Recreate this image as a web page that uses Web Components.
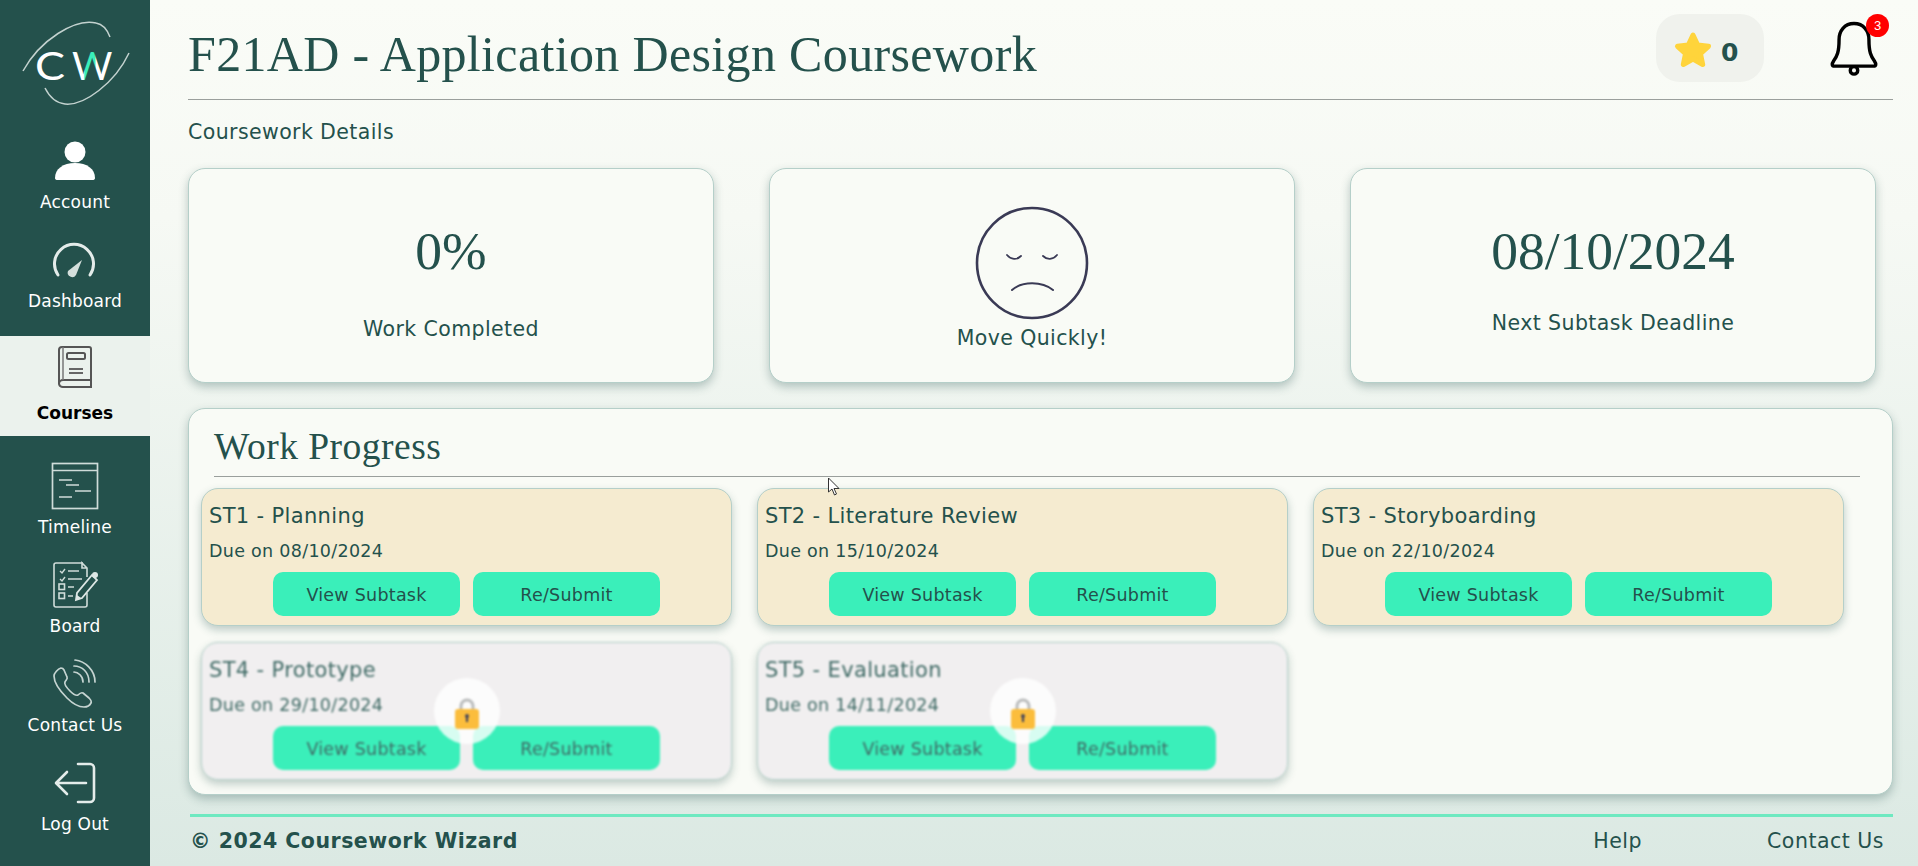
<!DOCTYPE html>
<html lang="en">
<head>
<meta charset="utf-8">
<title>Coursework Wizard</title>
<style>
html, body { margin: 0; height: 100%; }
body {
    font-family: "DejaVu Sans", Verdana, sans-serif;
    color: #24514c;
    background: linear-gradient(180deg, #fafcf7 0%, #f6f9f4 25%, #dbe9e3 100%);
    overflow: hidden;
}
</style>
</head>
<body>
<cw-app></cw-app>
<script>
const icons = {
    account: `<circle cx="30" cy="21" r="10.500" fill="#fff"/><path d="M10 47c0-9 8-15 20-15s20 6 20 15c0 1.500-1 2-2.500 2h-35C11 49 10 48.500 10 47z" fill="#fff"/>`,
    dashboard: `<g fill="none" stroke="#e4ecea" stroke-width="3" stroke-linecap="round"><path d="M14 45a19.500 19.500 0 1 1 32 0" transform="translate(-1 0)"/></g><path d="M23 41l14-11-6 15a4.500 4.500 0 0 1-8-4z" fill="#d5dfdc"/>`,
    courses: `<g fill="none" stroke="#555" stroke-width="2"><path d="M14 45V11a3 3 0 0 1 3-3h27a2 2 0 0 1 2 2v37"/><path d="M14 45a4 4 0 0 1 4-4h28v7H18a4 4 0 0 1-4-3z"/><rect x="22" y="14" width="18" height="6" rx="1.500"/></g><path d="M24 30h14M24 34h14" stroke="#666" stroke-width="2"/><path d="M18 8v33" stroke="#777" stroke-width="1.500"/>`,
    timeline: `<g fill="none" stroke="#cfdcd9" stroke-width="1.700"><rect x="7.500" y="7.500" width="45" height="45"/><path d="M7.500 14.500h45"/></g><path d="M14 24h13M21 29h13M30 35h16M14 41h13" stroke="#cfdcd9" stroke-width="1.700"/>`,
    board: `<g fill="none" stroke="#cfdcd9" stroke-width="1.600"><path d="M38 8H11a2 2 0 0 0-2 2v40a2 2 0 0 0 2 2h29a2 2 0 0 0 2-2V38"/><path d="M42 22v-9l-5-5v5h5"/><path d="M15 16l2 2 3-4M15 24l2 2 3-4" stroke-width="1.400"/><path d="M23 16h11M23 24h14M23 32h6M23 41h5"/><rect x="14" y="29" width="5.500" height="5.500"/><rect x="14" y="38" width="5.500" height="5.500"/></g><path d="M31 45l1-7 15-18 5 5-15 18z" fill="none" stroke="#dde7e5" stroke-width="1.800"/><circle cx="50" cy="20" r="3" fill="#dde7e5"/><path d="M31 45l1-5 4 3z" fill="#dde7e5"/>`,
    contact: `<g fill="none" stroke="#c5d4d1" stroke-width="1.700" stroke-linecap="round" stroke-linejoin="round"><path d="M16 14c-3 1-7 5-7 8 0 8 7 16 13 22 5 5 12 9 17 9 3 0 6-2 7-4 1-2 0-3-2-5l-6-5c-2-1-3 0-5 2-2 1-4 0-8-4s-6-7-5-9 3-3 2-5l-3-7c-1-2-2-2-3-2z"/><path d="M29 18c4 0 9 4 9 10"/><path d="M29 12c8 0 15 6 15 16" /><path d="M30 6c10 1 20 10 20 22"/></g>`,
    logout: `<g fill="none" stroke="#e4ecea" stroke-width="2.600" stroke-linecap="round" stroke-linejoin="round"><path d="M33 11h12a4 4 0 0 1 4 4v30a4 4 0 0 1-4 4H33"/><path d="M41 30H12M22 19L11 30l11 11"/></g>`,
};

class CwLogo extends HTMLElement {
    constructor() {
        super();
        this.attachShadow({ mode: "open" });
    }

    connectedCallback() {
        this.shadowRoot.innerHTML = `
            <style>
            :host { display: block; height: 125px; }
            svg { display: block; }
            </style>
            <svg width="150" height="125" viewBox="0 0 150 125">
                <defs>
                    <linearGradient id="w" x1="0" x2="38" y1="0" y2="0" gradientUnits="userSpaceOnUse">
                        <stop offset="0.3" stop-color="#fff"/>
                        <stop offset="0.34" stop-color="#3aefba"/>
                        <stop offset="0.6" stop-color="#3aefba"/>
                        <stop offset="0.64" stop-color="#fff"/>
                    </linearGradient>
                </defs>
                <path d="M23 71C40 40 75 18 96 23c6 1 11 6 14 14" fill="none" stroke="#c3d2cf" stroke-width="1.500"/>
                <path d="M129 53c-14 30-45 53-64 51-9-1-15-6-20-16" fill="none" stroke="#c3d2cf" stroke-width="1.500"/>
                <text transform="translate(35 80) scale(1.150 1)" font-family="Lato, sans-serif" font-weight="400" font-size="39" fill="#fff">C</text>
                <text transform="translate(72 80)" font-family="Lato, sans-serif" font-weight="400" font-size="39" fill="url(#w)">W</text>
            </svg>
        `;
    }
}

class CwNavItem extends HTMLElement {
    constructor() {
        super();
        this.attachShadow({ mode: "open" });
    }

    connectedCallback() {
        this.shadowRoot.innerHTML = `
            <style>
            :host {
                display: flex;
                flex-direction: column;
                align-items: center;
                height: 99px;
                color: #fff;
                font-size: 17px;
                letter-spacing: .2px;
            }
            :host([active]) {
                height: 100px;
                margin: 13px 0 14px;
                background: #ebf2ed;
                color: #000;
                font-weight: 700;
                letter-spacing: 0;
            }
            .icon { height: 67px; padding-top: 6px; box-sizing: border-box; }
            :host([active]) .icon { padding-top: 3px; }
            svg { display: block; }
            .label { line-height: 20px; }
            </style>
            <div class="icon"><svg width="60" height="60" viewBox="0 0 60 60">${icons[this.getAttribute("icon")]}</svg></div>
            <div class="label"><slot></slot></div>
        `;
    }
}

class CwSidebar extends HTMLElement {
    constructor() {
        super();
        this.attachShadow({ mode: "open" });
    }

    connectedCallback() {
        this.shadowRoot.innerHTML = `
            <style>
            :host {
                display: flex;
                flex-direction: column;
                flex: 0 0 150px;
                height: 866px;
                background: #24514c;
            }
            </style>
            <slot></slot>
        `;
    }
}

class CwHeader extends HTMLElement {
    constructor() {
        super();
        this.attachShadow({ mode: "open" });
    }

    connectedCallback() {
        this.shadowRoot.innerHTML = `
            <style>
            :host {
                display: flex;
                align-items: flex-start;
                height: 100px;
                border-bottom: 1px solid #9a9f9c;
                box-sizing: border-box;
            }
            h1 {
                flex: 1;
                margin: 0;
                padding-top: 25px;
                font: 400 50px/58px "Liberation Serif", Georgia, serif;
                letter-spacing: .35px;
                color: #24514c;
            }
            .stars {
                display: flex;
                align-items: center;
                width: 108px;
                height: 68px;
                margin-top: 14px;
                padding-left: 17px;
                box-sizing: border-box;
                border-radius: 24px;
                background: #f0f2ed;
                font-weight: 700;
                font-size: 25px;
                gap: 8px;
            }
            .stars svg { margin-top: 2px; }
            .stars span { margin-top: 8px; }
            .bell {
                position: relative;
                width: 64px;
                height: 64px;
                margin: 16px 7px 0 58px;
            }
            .bell svg { display: block; }
            .badge {
                position: absolute;
                top: -2px;
                right: -3px;
                width: 23px;
                height: 23px;
                border-radius: 50%;
                background: #ff0000;
                color: #fff;
                font: 13px/23px "Liberation Sans", Arial, sans-serif;
                text-align: center;
            }
            </style>
            <h1><slot></slot></h1>
            <div class="stars">
                <svg width="40" height="38" viewBox="0 0 40 38"><path d="M20 5l4.700 10 10.800 1.300-8 7.400 2.200 10.800L20 29l-9.700 5.500 2.200-10.800-8-7.400L15.300 15z" fill="#ffd43b" stroke="#ffd43b" stroke-width="5" stroke-linejoin="round"/></svg>
                <span>0</span>
            </div>
            <div class="bell">
                <svg width="64" height="64" viewBox="0 0 60 60" fill="none" stroke="#000" stroke-width="3.200" stroke-linecap="round" stroke-linejoin="round">
                    <path d="M30 7c-9 0-14 7-14 15 0 12-2 16-5 20-2 3-2 5 1 5h36c3 0 3-2 1-5-3-4-5-8-5-20 0-8-5-15-14-15z"/>
                    <circle cx="30" cy="51" r="3.500"/>
                </svg>
                <div class="badge">3</div>
            </div>
        `;
    }
}

class CwStatCard extends HTMLElement {
    constructor() {
        super();
        this.attachShadow({ mode: "open" });
    }

    connectedCallback() {
        this.shadowRoot.innerHTML = `
            <style>
            :host {
                display: flex;
                flex-direction: column;
                align-items: center;
                height: 215px;
                box-sizing: border-box;
                border: 1px solid #b5cfc9;
                border-radius: 17px;
                background: #f9fbf6;
                box-shadow: 0 4px 10px rgba(36, 81, 76, .3);
                text-align: center;
                font-size: 20.500px;
                letter-spacing: .4px;
            }
            ::slotted([slot=big]) {
                font: 400 53.500px/60px "Liberation Serif", Georgia, serif;
                letter-spacing: 0;
            }
            </style>
            <slot name="big"></slot>
            <slot></slot>
        `;
    }
}

class CwSubtask extends HTMLElement {
    constructor() {
        super();
        this.attachShadow({ mode: "open" });
    }

    connectedCallback() {
        const locked = this.hasAttribute("locked");
        this.shadowRoot.innerHTML = `
            <style>
            :host {
                display: block;
                position: relative;
                height: 138px;
                box-sizing: border-box;
                border: 1px solid #b5cfc9;
                border-radius: 17px;
                background: #f5ebd0;
                box-shadow: 0 4px 8px rgba(36, 81, 76, .28);
                overflow: hidden;
            }
            :host([locked]) {
                background: #f1eff0;
                overflow: visible;
                color: #3f6a65;
                filter: blur(.9px);
            }
            .content { padding: 0 7px; height: 100%; box-sizing: border-box; }
            .title { font-size: 21px; letter-spacing: .35px; line-height: 26px; padding-top: 14px; }
            .due { font-size: 17.500px; letter-spacing: .3px; line-height: 20px; margin-top: 12px; }
            .actions {
                display: flex;
                justify-content: center;
                gap: 13px;
                margin-top: 11px;
            }
            .actions span {
                width: 187px;
                height: 44px;
                border-radius: 10px;
                background: #3aefba;
                font-size: 17.500px;
                letter-spacing: .25px;
                line-height: 46px;
                text-align: center;
            }
            .lock {
                position: absolute;
                left: 50%;
                top: 35px;
                width: 66px;
                height: 66px;
                margin-left: -33px;
                border-radius: 50%;
                background: rgba(255, 255, 255, .8);
                display: flex;
                align-items: center;
                justify-content: center;
            }
            .lock svg { margin-top: 4px; }
            </style>
            <div class="content">
                <div class="title"><slot name="title"></slot></div>
                <div class="due">Due on <slot name="due"></slot></div>
                <div class="actions"><span>View Subtask</span><span>Re/Submit</span></div>
            </div>
            ${locked ? `<div class="lock"><svg width="28" height="32" viewBox="0 0 28 32">
                <path d="M8 13V9a6 6 0 0 1 12 0v4" fill="none" stroke="#b9bbbb" stroke-width="3"/>
                <rect x="2" y="12" width="24" height="20" rx="3" fill="#fbbd3c"/>
                <path d="M14 17a2 2 0 0 1 1 3.700V25h-2v-4.300A2 2 0 0 1 14 17z" fill="#3a3f5c"/>
            </svg></div>` : ""}
        `;
    }
}

class CwPanel extends HTMLElement {
    constructor() {
        super();
        this.attachShadow({ mode: "open" });
    }

    connectedCallback() {
        this.shadowRoot.innerHTML = `
            <style>
            :host {
                display: block;
                height: 387px;
                margin-top: 25px;
                box-sizing: border-box;
                padding: 0 13px 0 12px;
                border: 1px solid #b5cfc9;
                border-radius: 17px;
                background: #f9fbf6;
                box-shadow: 0 4px 10px rgba(36, 81, 76, .3);
            }
            h2 {
                margin: 0 19px 0 13px;
                height: 68px;
                box-sizing: border-box;
                padding-top: 17px;
                border-bottom: 1px solid #9a9f9c;
                font: 400 37.500px/42px "Liberation Serif", Georgia, serif;
                letter-spacing: .5px;
                color: #24514c;
            }
            .grid {
                display: grid;
                grid-template-columns: repeat(3, 531px);
                column-gap: 25px;
                row-gap: 16px;
                margin-top: 11px;
            }
            </style>
            <h2><slot name="heading"></slot></h2>
            <div class="grid"><slot></slot></div>
        `;
    }
}

class CwFooter extends HTMLElement {
    constructor() {
        super();
        this.attachShadow({ mode: "open" });
    }

    connectedCallback() {
        this.shadowRoot.innerHTML = `
            <style>
            :host {
                display: flex;
                align-items: center;
                height: 50px;
                margin: 19px 0 0 2px;
                padding: 0 9px 0 0;
                border-top: 3px solid #6ee9c0;
                box-sizing: border-box;
                font-size: 20.500px;
                letter-spacing: .5px;
                color: #24514c;
            }
            b { flex: 1; }
            .help { margin-right: 125px; }
            </style>
            <b>© 2024 Coursework Wizard</b>
            <span class="help">Help</span>
            <span>Contact Us</span>
        `;
    }
}

class CwApp extends HTMLElement {
    constructor() {
        super();
        this.attachShadow({ mode: "open" });
    }

    connectedCallback() {
        this.shadowRoot.innerHTML = `
            <style>
            :host { display: flex; width: 1918px; height: 866px; position: relative; }
            main { flex: 1; padding: 0 25px 0 38px; min-width: 0; }
            .sub { margin: 0; font-size: 20.500px; letter-spacing: .4px; line-height: 24px; padding-top: 20px; height: 68px; box-sizing: border-box; }
            .stats {
                display: grid;
                grid-template-columns: repeat(3, 526px);
                column-gap: 55px;
            }
            .big { padding-top: 52px; }
            .cap { margin-top: 36px; line-height: 24px; }
            .cap2 { margin-top: 30px; line-height: 24px; }
            .face { margin-top: 37px; display: block; }
            .cap3 { margin-top: 6px; line-height: 24px; }
            .cursor { position: absolute; left: 827px; top: 477px; }
            </style>
            <cw-sidebar>
                <cw-logo></cw-logo>
                <cw-nav-item icon="account">Account</cw-nav-item>
                <cw-nav-item icon="dashboard">Dashboard</cw-nav-item>
                <cw-nav-item icon="courses" active>Courses</cw-nav-item>
                <cw-nav-item icon="timeline">Timeline</cw-nav-item>
                <cw-nav-item icon="board">Board</cw-nav-item>
                <cw-nav-item icon="contact">Contact Us</cw-nav-item>
                <cw-nav-item icon="logout">Log Out</cw-nav-item>
            </cw-sidebar>
            <main>
                <cw-header>F21AD - Application Design Coursework</cw-header>
                <p class="sub">Coursework Details</p>
                <div class="stats">
                    <cw-stat-card>
                        <div slot="big" class="big">0%</div>
                        <div class="cap">Work Completed</div>
                    </cw-stat-card>
                    <cw-stat-card>
                        <svg class="face" width="114" height="114" viewBox="0 0 114 114" fill="none" stroke="#3a3a55" stroke-linecap="round">
                            <circle cx="57" cy="57" r="55" stroke-width="2.600"/>
                            <path d="M32 49c4 5 10 5 14 1M68 50c4 4 10 4 14-1" stroke-width="1.800"/>
                            <path d="M37 84c10-9 30-9 41 0" stroke-width="2"/>
                        </svg>
                        <div class="cap3">Move Quickly!</div>
                    </cw-stat-card>
                    <cw-stat-card>
                        <div slot="big" class="big">08/10/2024</div>
                        <div class="cap2">Next Subtask Deadline</div>
                    </cw-stat-card>
                </div>
                <cw-panel>
                    <span slot="heading">Work Progress</span>
                    <cw-subtask><span slot="title">ST1 - Planning</span><span slot="due">08/10/2024</span></cw-subtask>
                    <cw-subtask><span slot="title">ST2 - Literature Review</span><span slot="due">15/10/2024</span></cw-subtask>
                    <cw-subtask><span slot="title">ST3 - Storyboarding</span><span slot="due">22/10/2024</span></cw-subtask>
                    <cw-subtask locked><span slot="title">ST4 - Prototype</span><span slot="due">29/10/2024</span></cw-subtask>
                    <cw-subtask locked><span slot="title">ST5 - Evaluation</span><span slot="due">14/11/2024</span></cw-subtask>
                </cw-panel>
                <cw-footer></cw-footer>
            </main>
            <svg class="cursor" width="14" height="20" viewBox="0 0 14 20"><path d="M1.500 1v14l3.500-3 2.500 6 2-1-2.500-5.500H12z" fill="#fff" stroke="#333" stroke-width="1"/></svg>
        `;
    }
}

customElements.define("cw-logo", CwLogo);
customElements.define("cw-nav-item", CwNavItem);
customElements.define("cw-sidebar", CwSidebar);
customElements.define("cw-header", CwHeader);
customElements.define("cw-stat-card", CwStatCard);
customElements.define("cw-subtask", CwSubtask);
customElements.define("cw-panel", CwPanel);
customElements.define("cw-footer", CwFooter);
customElements.define("cw-app", CwApp);
</script>
</body>
</html>
